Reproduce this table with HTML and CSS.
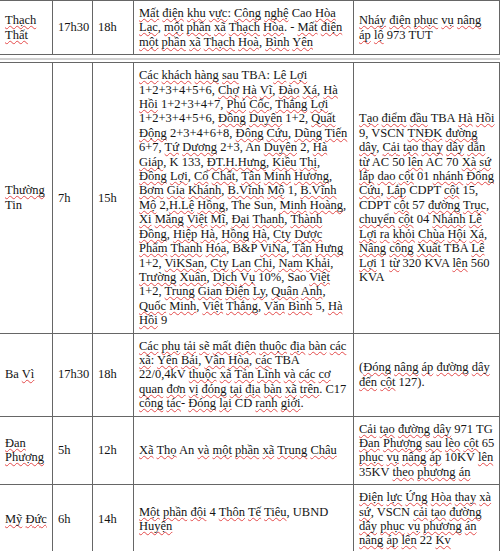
FILE: index.html
```html
<!DOCTYPE html>
<html lang="vi">
<head>
<meta charset="utf-8">
<title>Lịch cắt điện</title>
<link rel="stylesheet" href="styles.css">
</head>
<body>
<table class="sched sched-top">
  <colgroup>
    <col class="c-area"><col class="c-from"><col class="c-to"><col class="c-place"><col class="c-work">
  </colgroup>
  <tr class="r-thach">
    <td class="area"><u>Thạch</u><br><u>Thất</u></td>
    <td>17h30</td>
    <td>18h</td>
    <td><u>Mất</u> <u>điện</u> <u>khu</u> <u>vực</u>: <u>Công</u> <u>nghệ</u> Cao <u>Hòa</u><br><u>Lạc</u>, <u>một</u> <u>phần</u> <u>xã</u> <u>Thạch</u> <u>Hòa</u>. - <u>Mất</u> <u>điện</u><br><u>một</u> <u>phần</u> <u>xã</u> <u>Thạch</u> <u>Hoà</u>, <u>Bình</u> <u>Yên</u></td>
    <td><u>Nháy</u> <u>điện</u> <u>phục</u> <u>vụ</u> <u>nâng</u><br><u>áp</u> <u>lộ</u> 973 TUT</td>
  </tr>
</table>
<div class="rule"></div>
<table class="sched">
  <colgroup>
    <col class="c-area"><col class="c-from"><col class="c-to"><col class="c-place"><col class="c-work">
  </colgroup>
  <tr>
    <td class="area"><u>Thường</u><br>Tin</td>
    <td>7h</td>
    <td>15h</td>
    <td><u>Các</u> <u>khách</u> <u>hàng</u> <u>sau</u> TBA: <u>Lê</u> <u>Lợi</u><br>1+2+3+4+5+6, <u>Chợ</u> <u>Hà</u> <u>Vĩ</u>, <u>Đào</u> <u>Xá</u>, <u>Hà</u><br><u>Hồi</u> 1+2+3+4+7, <u>Phú</u> <u>Cốc</u>, <u>Thắng</u> <u>Lợi</u><br>1+2+3+4+5+6, <u>Đông</u> <u>Duyên</u> 1+2, <u>Quất</u><br><u>Động</u> 2+3+4+6+8, <u>Đông</u> <u>Cứu</u>, <u>Dũng</u> <u>Tiến</u><br>6+7, <u>Tứ</u> <u>Dương</u> 2+3, An <u>Duyên</u> 2, <u>Hà</u><br><u>Giáp</u>, K 133, <u>ĐT.H.Hưng</u>, <u>Kiều</u> <u>Thị</u>,<br><u>Đồng</u> <u>Lợi</u>, <u>Cổ</u> <u>Chất</u>, <u>Tân</u> <u>Minh</u> <u>Hương</u>,<br><u>Bơm</u> <u>Gia</u> <u>Khánh</u>, <u>B.Vĩnh</u> <u>Mộ</u> 1, <u>B.Vĩnh</u><br><u>Mộ</u> 2,<u>H.Lệ</u> <u>Hồng</u>, The Sun, <u>Minh</u> <u>Hoàng</u>,<br><u>Xi</u> <u>Măng</u> <u>Việt</u> <u>Mĩ</u>, <u>Đại</u> <u>Thanh</u>, <u>Thành</u><br><u>Đồng</u>, <u>Hiệp</u> <u>Hà</u>, <u>Hồng</u> <u>Hà</u>, <u>Cty</u> <u>Dược</u><br><u>Phẩm</u> <u>Thanh</u> <u>Hóa</u>, B&amp;P <u>ViNa</u>, <u>Tân</u> <u>Hưng</u><br>1+2, <u>ViKSan</u>, <u>Cty</u> <u>Lan</u> <u>Chi</u>, <u>Nam</u> <u>Khải</u>,<br><u>Trường</u> <u>Xuân</u>, <u>Dịch</u> <u>Vụ</u> 10%, Sao <u>Việt</u><br>1+2, <u>Trung</u> <u>Gian</u> <u>Điện</u> <u>Ly</u>, <u>Quân</u> <u>Anh</u>,<br><u>Quốc</u> <u>Minh</u>, <u>Việt</u> <u>Thắng</u>, <u>Văn</u> <u>Bình</u> 5, <u>Hà</u><br><u>Hồi</u> 9</td>
    <td><u>Tạo</u> <u>điểm</u> <u>đầu</u> TBA <u>Hà</u> <u>Hồi</u><br>9, VSCN <u>TNĐK</u> <u>đường</u><br><u>dây</u>, <u>Cải</u> <u>tạo</u> <u>thay</u> <u>dây</u> <u>dẫn</u><br><u>từ</u> AC 50 <u>lên</u> AC 70 <u>Xà</u> <u>sứ</u><br><u>lắp</u> <u>dao</u> <u>cột</u> 01 <u>nhánh</u> <u>Đông</u><br><u>Cứu</u>, <u>Lắp</u> CDPT <u>cột</u> 15,<br>CDPT <u>cột</u> 57 <u>đường</u> <u>Trục</u>,<br><u>chuyển</u> <u>cột</u> 04 <u>Nhánh</u> <u>Lê</u><br><u>Lợi</u> <u>ra</u> <u>khỏi</u> <u>Chùa</u> <u>Hội</u> <u>Xá</u>,<br><u>Nâng</u> <u>công</u> <u>Xuất</u> TBA <u>Lê</u><br><u>Lợi</u> 1 <u>từ</u> 320 KVA <u>lên</u> 560<br>KVA</td>
  </tr>
  <tr>
    <td class="area">Ba <u>Vì</u></td>
    <td>17h30</td>
    <td>18h</td>
    <td><u>Các</u> <u>phụ</u> <u>tải</u> <u>sẽ</u> <u>mất</u> <u>điện</u> <u>thuộc</u> <u>địa</u> <u>bàn</u> <u>các</u><br><u>xã</u>: <u>Yên</u> <u>Bái</u>, <u>Vân</u> <u>Hòa</u>, <u>các</u> TBA<br>22/0,4kV <u>thuộc</u> <u>xã</u> <u>Tản</u> <u>Lĩnh</u> <u>và</u> <u>các</u> <u>cơ</u><br><u>quan</u> <u>đơn</u> <u>vị</u> <u>đóng</u> <u>tại</u> <u>địa</u> <u>bàn</u> <u>xã</u> <u>trên</u>. C17<br><u>công</u> <u>tác</u>- <u>Đóng</u> <u>lại</u> CD <u>ranh</u> <u>giới</u>.</td>
    <td>(<u>Đóng</u> <u>nâng</u> <u>áp</u> <u>đường</u> <u>dây</u><br><u>đến</u> <u>cột</u> 127).</td>
  </tr>
  <tr>
    <td class="area"><u>Đan</u><br><u>Phượng</u></td>
    <td>5h</td>
    <td>12h</td>
    <td><u>Xã</u> <u>Thọ</u> An <u>và</u> <u>một</u> <u>phần</u> <u>xã</u> <u>Trung</u> <u>Châu</u></td>
    <td><u>Cải</u> <u>tạo</u> <u>đường</u> <u>dây</u> 971 TG<br><u>Đan</u> <u>Phượng</u> <u>sau</u> <u>lèo</u> <u>cột</u> 65<br><u>phục</u> <u>vụ</u> <u>nâng</u> <u>áp</u> 10KV <u>lên</u><br>35KV <u>theo</u> <u>phương</u> <u>án</u></td>
  </tr>
  <tr>
    <td class="area"><u>Mỹ</u> <u>Đức</u></td>
    <td>6h</td>
    <td>14h</td>
    <td><u>Một</u> <u>phần</u> <u>đội</u> 4 <u>Thôn</u> <u>Tế</u> <u>Tiêu</u>, UBND<br><u>Huyện</u></td>
    <td><u>Điện</u> <u>lực</u> <u>Ứng</u> <u>Hòa</u> <u>thay</u> <u>xà</u><br><u>sứ</u>, VSCN <u>cải</u> <u>tạo</u> <u>đường</u><br><u>dây</u> <u>phục</u> <u>vụ</u> <u>phương</u> <u>án</u><br><u>nâng</u> <u>áp</u> <u>lên</u> 22 <u>Kv</u></td>
  </tr>
</table>
</body>
</html>
```
FILE: styles.css
```css
html, body {
  margin: 0;
  padding: 0;
  background: #ffffff;
}

body {
  font-family: "Liberation Serif", "Times New Roman", serif;
  font-size: 12.5px;
  line-height: 14.4px;
  color: #141414;
}

.sched {
  border-collapse: collapse;
  table-layout: fixed;
  margin-left: -1px;
  width: 500px;
}

.sched td {
  border: 1px solid #666666;
  padding: 5px 5px 5px 5px;
  vertical-align: middle;
  white-space: nowrap;
  overflow: hidden;
}

.c-area { width: 53px; }
.c-from { width: 40px; }
.c-to { width: 41px; }
.c-place { width: 220px; }
.c-work { width: 146px; }

.sched u {
  text-decoration-line: underline;
  text-decoration-style: wavy;
  text-decoration-color: #e44a4a;
  text-decoration-thickness: 1px;
  text-underline-offset: 1px;
  text-decoration-skip-ink: none;
}

.rule {
  height: 2px;
  background: #cfcfcf;
  margin: 3px 0 2px 0;
}
```
